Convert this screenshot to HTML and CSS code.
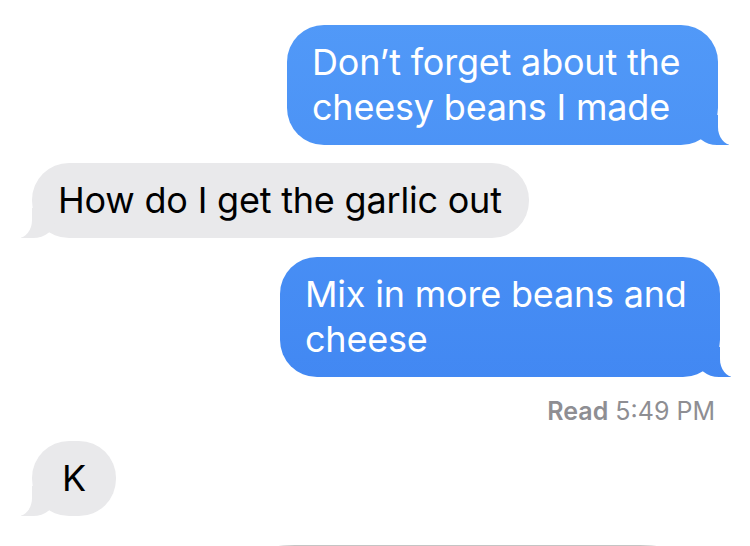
FILE: index.html
```html
<!DOCTYPE html>
<html lang="en">
<head>
<meta charset="utf-8">
<title>Messages</title>
<link rel="stylesheet" href="styles.css">
</head>
<body>
  <main class="thread">
    <div class="row row-out">
      <p class="bubble bubble-out bubble-narrow">Don’t forget about the cheesy beans I made</p>
    </div>
    <div class="row row-in">
      <p class="bubble bubble-in">How do I get the garlic out</p>
    </div>
    <div class="row row-out row-gap">
      <p class="bubble bubble-out bubble-wide">Mix in more beans and cheese</p>
    </div>
    <div class="receipt"><span class="receipt-label">Read</span> 5:49 PM</div>
    <div class="row row-in row-after-receipt">
      <p class="bubble bubble-in bubble-short">K</p>
    </div>
    <div class="row row-peek">
      <div class="peek"></div>
    </div>
  </main>
</body>
</html>
```
FILE: styles.css
```css
html, body {
  margin: 0;
  padding: 0;
  background: #ffffff;
}

body {
  width: 750px;
  height: 546px;
  overflow: hidden;
  font-family: "Inter", "Roboto", "Liberation Sans", sans-serif;
  -webkit-font-smoothing: antialiased;
}

.thread {
  display: flex;
  flex-direction: column;
  padding: 25px 32px 0 32px;
}

.row {
  display: flex;
}

.row-out {
  justify-content: flex-end;
}

.row-in {
  justify-content: flex-start;
  margin-top: 18px;
}

.row-gap {
  margin-top: 19px;
}

.row-after-receipt {
  margin-top: 15px;
}

.bubble {
  position: relative;
  margin: 0;
  box-sizing: border-box;
  padding: 15px 33px 15px 25px;
  font-size: 36px;
  line-height: 45px;
  letter-spacing: -0.2px;
  border-radius: 37px;
}

.bubble-out {
  color: #ffffff;
  background: linear-gradient(to bottom, #529af8 0px, #3b80f0 546px) fixed;
}

.bubble-narrow {
  width: 431px;
}

.bubble-wide {
  width: 440px;
  margin-right: -2px;
}

.bubble-out::before {
  content: "";
  position: absolute;
  right: -11px;
  bottom: 0;
  width: 34px;
  height: 30px;
  background: linear-gradient(to bottom, #529af8 0px, #3b80f0 546px) fixed;
  border-bottom-left-radius: 22px 18px;
}

.bubble-out::after {
  content: "";
  position: absolute;
  right: -20px;
  bottom: 0;
  width: 20px;
  height: 32px;
  background: #ffffff;
  border-bottom-left-radius: 14px 18px;
}

.bubble-in {
  color: #000000;
  background: #e9e9eb;
  padding: 15px 27px 15px 26px;
}

.bubble-in::before {
  content: "";
  position: absolute;
  left: -11px;
  bottom: 0;
  width: 34px;
  height: 30px;
  background: #e9e9eb;
  border-bottom-right-radius: 22px 18px;
}

.bubble-in::after {
  content: "";
  position: absolute;
  left: -20px;
  bottom: 0;
  width: 20px;
  height: 32px;
  background: #ffffff;
  border-bottom-right-radius: 14px 18px;
}

.bubble-short {
  min-width: 84px;
  text-align: center;
  padding-left: 0;
  padding-right: 0;
}

.receipt {
  align-self: flex-end;
  margin-top: 19px;
  margin-right: 3px;
  font-size: 25px;
  line-height: 30px;
  color: #8e8e93;
}

.receipt-label {
  font-weight: 600;
}

.row-peek {
  justify-content: flex-start;
  margin-top: 29px;
  padding-left: 233px;
}

.peek {
  width: 405px;
  height: 20px;
  background: #c4c4c4;
  border-radius: 30px 30px 0 0 / 6px 6px 0 0;
}
```
